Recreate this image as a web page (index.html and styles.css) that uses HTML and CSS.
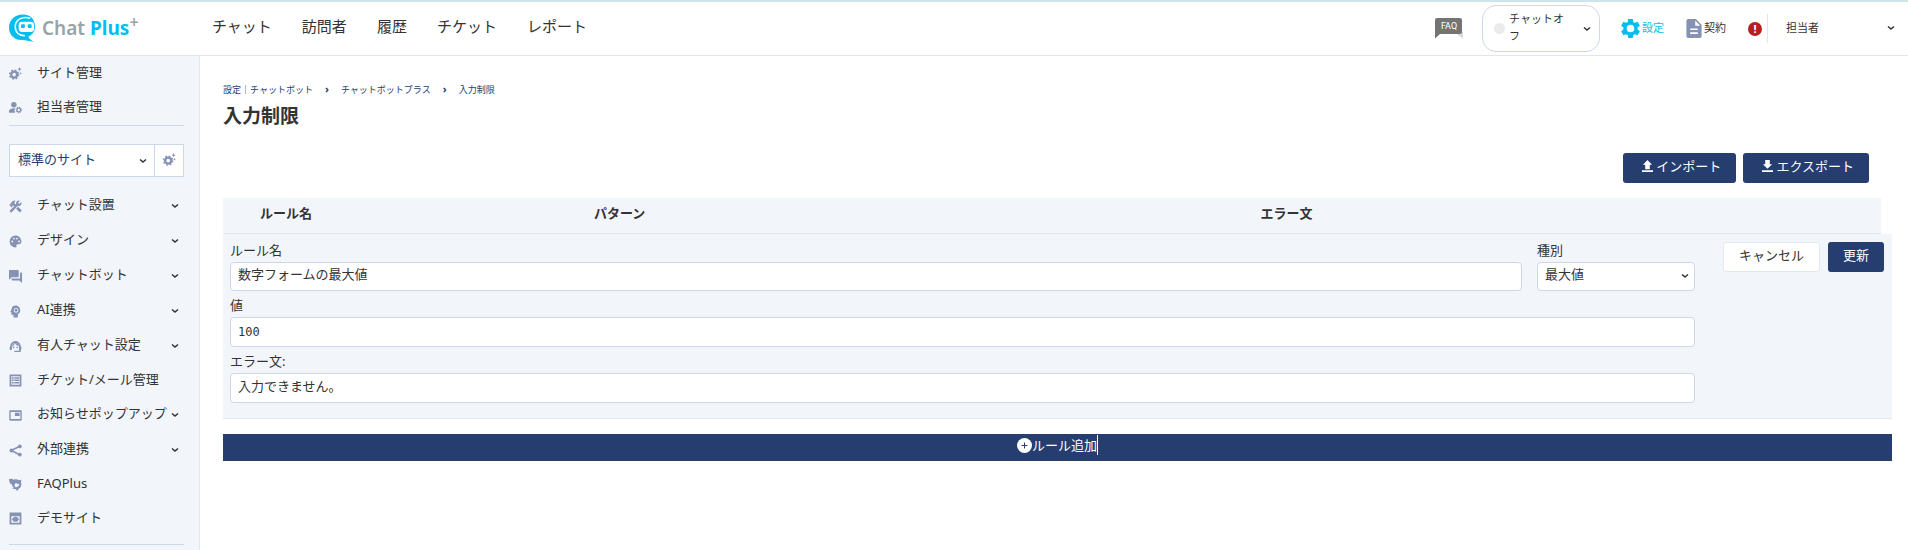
FILE: index.html
```html
<!DOCTYPE html>
<html lang="ja">

<head>
  <meta charset="UTF-8">
  <meta name="viewport" content="width=device-width, initial-scale=1.0">
  <title>入力制限 | Chat Plus</title>
  <link rel="stylesheet" href="styles.css">
</head>

<body>
  <!-- icons -->
  <svg class="sprite" aria-hidden="true">
    <symbol id="arrow" viewBox="0 0 8 6"><path d="M1 1.5l3 2.6 3-2.6" fill="none" stroke="currentColor" stroke-width="1.5"/></symbol>
    <symbol id="gear" viewBox="2 2 20 20"><path d="M19.43 12.98c.04-.32.07-.64.07-.98s-.03-.66-.07-.98l2.11-1.65c.19-.15.24-.42.12-.64l-2-3.46c-.12-.22-.39-.3-.61-.22l-2.49 1c-.52-.4-1.08-.73-1.69-.98l-.38-2.65A.49.49 0 0 0 14 2h-4c-.25 0-.46.18-.49.42l-.38 2.65c-.61.25-1.17.59-1.69.98l-2.49-1c-.23-.09-.49 0-.61.22l-2 3.46c-.13.22-.07.49.12.64l2.11 1.65c-.04.32-.07.65-.07.98s.03.66.07.98l-2.11 1.65c-.19.15-.24.42-.12.64l2 3.46c.12.22.39.3.61.22l2.49-1c.52.4 1.08.73 1.69.98l.38 2.65c.03.24.24.42.49.42h4c.25 0 .46-.18.49-.42l.38-2.65c.61-.25 1.17-.59 1.69-.98l2.49 1c.23.09.49 0 .61-.22l2-3.46c.12-.22.07-.49-.12-.64l-2.11-1.65zM12 16a4 4 0 1 1 0-8 4 4 0 0 1 0 8z"/></symbol>
    <symbol id="gears" viewBox="0 0 24 24"><g fill="none" stroke="currentColor"><circle cx="9.500" cy="14" r="5.500" stroke-width="4.200"/><circle cx="9.500" cy="14" r="8.300" stroke-width="2.600" stroke-dasharray="3.260"/></g><path d="M19.500 0l1.100 2.900 2.900 1.100-2.900 1.100L19.500 8l-1.100-2.900L15.500 4l2.900-1.100zM21.500 9l.8 2 1.700.7-1.700.8-.8 2-.8-2-1.700-.8 1.700-.7z"/></symbol>
    <symbol id="users" viewBox="0 0 24 24"><circle cx="9" cy="7" r="5"/><path d="M11 13.500C6 13 0 15 0 19v2.500h11a8 8 0 0 1 0-8z"/><g fill="none" stroke="currentColor"><circle cx="18" cy="16.500" r="3.400" stroke-width="2.400"/><circle cx="18" cy="16.500" r="5" stroke-width="2" stroke-dasharray="1.960"/></g></symbol>
    <symbol id="tools" viewBox="1 1 22 22"><path d="M13 16l3.500-3.500 6.200 6.200-3.500 3.500zM17.500 11a4.500 4.500 0 0 0 4.200-6.500l-3.200 3.200-2.200-2.200 3.200-3.200A4.500 4.500 0 0 0 13.200 7.500L12 8.800l-1.500-1.500.7-.7-1.600-1.600L12.500 2.500a4 4 0 0 0-5 .3L3.500 6.500 5 8H2.200l-1 1 4.500 4.500 1-1V9.800l1.400 1.400.8-.7 1 1L1.800 19.500l3 3L16 10.800z"/></symbol>
    <symbol id="palette" viewBox="1 1 22 22"><path fill-rule="evenodd" d="M12 2a10 10 0 0 0 0 20c1.400 0 2.200-1.200 1.700-2.400-.6-1.400.2-3 1.800-3H18a4 4 0 0 0 4-4C22 6.600 17.500 2 12 2zM6.500 13.500a1.500 1.500 0 1 1 0-3 1.500 1.500 0 0 1 0 3zm3-5a1.500 1.500 0 1 1 0-3 1.500 1.500 0 0 1 0 3zm5 0a1.500 1.500 0 1 1 0-3 1.500 1.500 0 0 1 0 3zm3.500 5a1.500 1.500 0 1 1 0-3 1.500 1.500 0 0 1 0 3z"/></symbol>
    <symbol id="forum" viewBox="2 2 20 20"><path d="M21 6h-2v9H6v2c0 .6.500 1 1 1h11l4 4V7c0-.6-.5-1-1-1zm-4 6V3c0-.6-.5-1-1-1H3c-.6 0-1 .4-1 1v14l4-4h10c.6 0 1-.5 1-1z"/></symbol>
    <symbol id="mind" viewBox="1 1 22 22"><path fill-rule="evenodd" d="M13 2a8 8 0 0 0-8 7.500L3.200 12.400c-.3.400 0 .9.400.9H5V16a2 2 0 0 0 2 2h1.500v4H16v-5.200A8 8 0 0 0 13 2zm0 4a4 4 0 1 1 0 8 4 4 0 0 1 0-8zm0 1.500a2.500 2.500 0 1 0 0 5 2.500 2.500 0 0 0 0-5z"/></symbol>
    <symbol id="agent" viewBox="1 2 22 20"><path d="M21 12.200C21 6.700 16.700 2.500 12 2.500s-9 4.100-9 9.800A2 2 0 0 0 2 14v2a2 2 0 0 0 2 2h2v-6a6 6 0 0 1 12 0v7h-8v2.500h9a2 2 0 0 0 2-2v-1.700c.6-.3 1-1 1-1.600v-2.400c0-.7-.4-1.300-1-1.600z"/><circle cx="9" cy="13.500" r="1.400"/><circle cx="15" cy="13.500" r="1.400"/><path d="M18 11a6 6 0 0 0-5.900-5c-3 0-6.300 2.500-6 6.500a8 8 0 0 0 4.800-5.900A8 8 0 0 0 18 11z"/></symbol>
    <symbol id="list" viewBox="1 1 22 22"><path fill-rule="evenodd" d="M2 2h20v20H2zm3 3v14h14V5zM6 6.500h3V9H6zm4 0h8V9h-8zm-4 4h3V13H6zm4 0h8V13h-8zm-4 4h3V17H6zm4 0h8V17h-8z"/></symbol>
    <symbol id="popup" viewBox="0 0 24 24"><path fill-rule="evenodd" d="M2 2.500h20A1.500 1.500 0 0 1 23.500 4v16a1.500 1.500 0 0 1-1.500 1.500H2A1.500 1.500 0 0 1 .5 20V4A1.500 1.500 0 0 1 2 2.500zm1 3v13h18v-13zM11 7h8.500v6H11z"/></symbol>
    <symbol id="share" viewBox="0 0 24 24"><path d="M20 4L4 12l16 8" fill="none" stroke="currentColor" stroke-width="3"/><circle cx="20" cy="4.500" r="3.500"/><circle cx="4.500" cy="12" r="3.500"/><circle cx="20" cy="19.500" r="3.500"/></symbol>
    <symbol id="faq" viewBox="0 0 24 24"><path fill-rule="evenodd" d="M0 2l6-.5 2 1.500c4-1.500 8-1 10 1l5-1-1 4.500c2 5 .5 10-3.500 12L15 24l-3-3.500c-3 0-5-1-6-2l3-1c-2.500-2-4-4-3.500-7L4 12C1.500 10 0 6 0 2zm13 7c-3 1-4 5-1 8 4.500 0 7-3 7-7-2 2-4 1-6-1z"/></symbol>
    <symbol id="demo" viewBox="1 1 22 22"><path fill-rule="evenodd" d="M2 2h20v20H2zm3 6v11h14V8zM12 9c3 0 4.500 1.500 6 4.200-1.500 2.800-3 4.300-6 4.300s-4.500-1.500-6-4.300C7.500 10.500 9 9 12 9z"/></symbol>
    <symbol id="doc" viewBox="0 0 16 20"><path fill-rule="evenodd" d="M2 0h8l6 6v12a2 2 0 0 1-2 2H2a2 2 0 0 1-2-2V2a2 2 0 0 1 2-2zm7.300 1.500V7h5.200zM4 10v1.700h8V10zm0 4v1.700h8V14z"/></symbol>
    <symbol id="upload" viewBox="0 0 12 13"><path d="M6 0l5 5H8.500v5h-5V5H1zM0 11.200h12V13H0z"/></symbol>
    <symbol id="download" viewBox="0 0 12 13"><path d="M3.500 0h5v4.500H11l-5 5-5-5h2.500zM0 11.200h12V13H0z"/></symbol>
  </svg>

  <header class="header">
    <a class="logo" href="#">
      <svg class="logo-mark" viewBox="0 0 28 30" aria-hidden="true">
        <path fill="#00bfef" d="M22 2.500C12-3 0 3 0 14c0 8 6 13.500 13.500 13 4 .2 8 1.200 12.500 2-2.500-1.500-4.500-3-6-5.500 4-1.500 7-5.500 7-10.500 0-4.500-2-8.500-5-10.500z"/>
        <path fill="none" stroke="#fff" stroke-width="1.600" d="M22 4.500C14 1.500 6.500 6 6.500 13c0 6 4 9.500 10 9.500"/>
        <rect x="10" y="8" width="16" height="10.500" rx="3.500" fill="#fff"/>
        <rect x="12.500" y="10.500" width="4" height="4" rx="1" fill="#00bfef"/>
        <rect x="19.500" y="10.500" width="4" height="4" rx="1" fill="#00bfef"/>
      </svg>
      <span class="logo-text">Chat <b>Plus</b><sup>+</sup></span>
    </a>
    <nav class="gnb">
      <a href="#">チャット</a>
      <a href="#">訪問者</a>
      <a href="#">履歴</a>
      <a href="#">チケット</a>
      <a href="#">レポート</a>
    </nav>
    <div class="util">
      <a class="faq-link" href="#">
        <svg viewBox="0 0 28 21" role="img" aria-label="FAQ">
          <path fill="#dedbd6" d="M20 14h8v7l-5-4z"/>
          <path fill="#747474" d="M2 0h23a2 2 0 0 1 2 2v12a2 2 0 0 1-2 2H5l-5 4.500V2a2 2 0 0 1 2-2z"/>
          <text x="14" y="11" text-anchor="middle" class="faq-text">FAQ</text>
        </svg>
      </a>
      <button class="status" type="button">
        <span class="dot"></span>
        <span class="status-text">チャットオフ</span>
        <svg class="arrow"><use href="#arrow"/></svg>
      </button>
      <a class="util-link active" href="#"><svg class="util-gear"><use href="#gear"/></svg>設定</a>
      <a class="util-link contract" href="#"><svg class="util-doc"><use href="#doc"/></svg>契約</a>
      <span class="alert">!</span>
      <button class="account" type="button">担当者<svg class="arrow"><use href="#arrow"/></svg></button>
    </div>
  </header>

  <div class="container">
    <aside class="side">
      <ul class="menu menu-top">
        <li><a href="#"><svg class="icon"><use href="#gears"/></svg>サイト管理</a></li>
        <li><a href="#"><svg class="icon"><use href="#users"/></svg>担当者管理</a></li>
      </ul>
      <div class="site-select">
        <select aria-label="サイト">
          <option>標準のサイト</option>
        </select>
        <button type="button" aria-label="サイト設定"><svg class="icon"><use href="#gears"/></svg></button>
      </div>
      <ul class="menu menu-main">
        <li class="has-sub"><a href="#"><svg class="icon"><use href="#tools"/></svg>チャット設置<svg class="arrow"><use href="#arrow"/></svg></a></li>
        <li class="has-sub"><a href="#"><svg class="icon"><use href="#palette"/></svg>デザイン<svg class="arrow"><use href="#arrow"/></svg></a></li>
        <li class="has-sub"><a href="#"><svg class="icon"><use href="#forum"/></svg>チャットボット<svg class="arrow"><use href="#arrow"/></svg></a></li>
        <li class="has-sub"><a href="#"><svg class="icon"><use href="#mind"/></svg>AI連携<svg class="arrow"><use href="#arrow"/></svg></a></li>
        <li class="has-sub"><a href="#"><svg class="icon"><use href="#agent"/></svg>有人チャット設定<svg class="arrow"><use href="#arrow"/></svg></a></li>
        <li><a href="#"><svg class="icon"><use href="#list"/></svg>チケット/メール管理</a></li>
        <li class="has-sub"><a href="#"><svg class="icon"><use href="#popup"/></svg>お知らせポップアップ<svg class="arrow"><use href="#arrow"/></svg></a></li>
        <li class="has-sub"><a href="#"><svg class="icon"><use href="#share"/></svg>外部連携<svg class="arrow"><use href="#arrow"/></svg></a></li>
        <li><a href="#"><svg class="icon"><use href="#faq"/></svg>FAQPlus</a></li>
        <li><a href="#"><svg class="icon"><use href="#demo"/></svg>デモサイト</a></li>
      </ul>
    </aside>

    <main class="contents">
      <nav class="breadcrumb">
        <a href="#">設定｜チャットボット</a><span>›</span><a href="#">チャットボットプラス</a><span>›</span><a href="#">入力制限</a>
      </nav>
      <h1>入力制限</h1>
      <div class="btns">
        <button class="btn" type="button"><svg><use href="#upload"/></svg>インポート</button>
        <button class="btn" type="button"><svg><use href="#download"/></svg>エクスポート</button>
      </div>

      <table class="rule-table">
        <thead>
          <tr>
            <th class="col-name">ルール名</th>
            <th class="col-pattern">パターン</th>
            <th>エラー文</th>
          </tr>
        </thead>
      </table>

      <form class="rule-form">
        <div class="fields">
          <div class="row">
            <div class="col">
              <label for="rule_name">ルール名</label>
              <input type="text" id="rule_name" value="数字フォームの最大値">
            </div>
            <div class="col col-type">
              <label for="rule_type">種別</label>
              <select id="rule_type">
                <option>最大値</option>
              </select>
            </div>
          </div>
          <div class="col">
            <label for="rule_value">値</label>
            <input class="mono" type="text" id="rule_value" value="100">
          </div>
          <div class="col">
            <label for="rule_error">エラー文:</label>
            <input type="text" id="rule_error" value="入力できません。">
          </div>
        </div>
        <div class="form-btns">
          <button class="btn btn-white" type="button">キャンセル</button>
          <button class="btn" type="submit">更新</button>
        </div>
      </form>

      <button class="btn-add" type="button">
        <svg viewBox="0 0 15 15"><circle cx="7.500" cy="7.500" r="7.500" fill="#fff"/><path d="M4.500 7.500h6M7.500 4.500v6" stroke="#263d70"/></svg>ルール追加<span class="caret"></span>
      </button>
    </main>
  </div>
</body>

</html>
```
FILE: styles.css
```css
* {
  box-sizing: border-box;
}

body {
  margin: 0;
  min-height: 100vh;
  display: flex;
  flex-direction: column;
  font-family: "Noto Sans", "Noto Sans CJK JP", sans-serif;
  font-size: 13px;
  line-height: 20px;
  color: #333333;
  background-color: #ffffff;
}

a {
  color: inherit;
  text-decoration: none;
}

button,
input,
select {
  font-family: inherit;
  font-size: 13px;
  line-height: 20px;
  color: #333333;
}

button {
  cursor: pointer;
}

svg {
  flex: none;
  fill: currentColor;
}

.sprite {
  position: absolute;
  width: 0;
  height: 0;
}

.arrow {
  width: 8px;
  height: 6px;
}

/* header */
.header {
  display: flex;
  align-items: center;
  height: 56px;
  padding: 0 13px 0 9px;
  border-top: 2px solid #cde4ea;
  border-bottom: 1px solid #e2e5f0;
}

.logo {
  display: flex;
  align-items: center;
  width: 203px;
}

.logo-mark {
  width: 27px;
  height: 29px;
  margin-right: 6px;
}

.logo-text {
  padding-bottom: 2px;
  font-family: "Noto Sans", sans-serif;
  font-size: 19px;
  font-weight: 600;
  line-height: 28px;
  color: #99a3a6;
}

.logo-text b {
  font-weight: 700;
  color: #00bfef;
}

.logo-text sup {
  font-size: 16px;
  line-height: 0;
}

.gnb {
  display: flex;
  gap: 30px;
  padding-bottom: 6px;
  font-size: 15px;
}

.util {
  display: flex;
  align-items: center;
  margin-left: auto;
  font-size: 11px;
}

.faq-link svg {
  display: block;
  width: 28px;
  height: 21px;
}

.faq-text {
  font-family: Roboto, sans-serif;
  font-size: 9px;
  fill: #ffffff;
}

.status {
  display: flex;
  align-items: center;
  width: 118px;
  height: 47px;
  margin-left: 19px;
  padding: 0 8px 0 11px;
  border: 1px solid #ccd7ea;
  border-radius: 14px;
  background-color: #ffffff;
}

.status .dot {
  width: 11px;
  height: 11px;
  margin-right: 4px;
  border-radius: 50%;
  background-color: #ebebeb;
}

.status-text {
  width: 60px;
  margin-right: auto;
  padding-bottom: 3px;
  font-size: 11px;
  line-height: 17px;
  text-align: left;
}

.util-link {
  display: flex;
  align-items: center;
  gap: 2px;
  margin-left: 21px;
  padding-bottom: 1px;
}

.util-link.contract {
  margin-left: 22px;
}

.util-link.active {
  color: #00bfef;
}

.util-gear {
  width: 19px;
  height: 19px;
}

.util-doc {
  width: 16px;
  height: 19px;
  color: #8592b3;
}

.alert {
  width: 14px;
  height: 14px;
  margin: 0 5px 0 22px;
  border-radius: 50%;
  font-weight: bold;
  line-height: 14px;
  text-align: center;
  color: #ffffff;
  background-color: #b3201f;
}

.account {
  display: flex;
  align-items: center;
  justify-content: space-between;
  width: 128px;
  height: 29px;
  padding: 0 0 1px 18px;
  border: none;
  border-left: 1px solid #dfe4f0;
  font-size: 11px;
  background: none;
}

/* side menu */
.container {
  display: flex;
  flex: 1;
}

.side {
  width: 200px;
  padding: 0 15px 0 9px;
  border-right: 1px solid #e2e5f0;
  background-color: #f2f5fa;
}

.menu {
  margin: 0;
  padding: 0;
  list-style: none;
  border-bottom: 1px solid #ccd7ea;
}

.menu a {
  display: flex;
  align-items: center;
  height: 34px;
  padding-bottom: 3px;
  white-space: nowrap;
}

.menu .has-sub a {
  height: 35px;
}

.menu-top {
  padding-bottom: 1px;
}

.menu .arrow {
  margin-top: 3px;
  margin-right: 5px;
  margin-left: auto;
}

.icon {
  width: 13px;
  height: 13px;
  color: #8592b3;
}

.menu .icon {
  margin-top: 4px;
  margin-right: 15px;
}

.menu-main {
  padding-bottom: 9px;
}

.site-select {
  display: flex;
  height: 33px;
  margin: 18px 0 11px;
  border: 1px solid #ccd7ea;
  background-color: #ffffff;
}

select {
  appearance: none;
  background: #ffffff url("data:image/svg+xml,%3Csvg xmlns='http://www.w3.org/2000/svg' viewBox='0 0 8 6'%3E%3Cpath d='M1 1.5l3 2.6 3-2.6' fill='none' stroke='%23333' stroke-width='1.5'/%3E%3C/svg%3E") right 7px center / 8px 6px no-repeat;
}

.site-select select {
  flex: 1;
  min-width: 0;
  padding: 0 20px 3px 8px;
  border: none;
  color: #263d70;
}

.site-select button {
  display: flex;
  align-items: center;
  justify-content: center;
  width: 29px;
  padding: 0 0 2px;
  border: none;
  border-left: 1px solid #ccd7ea;
  background: none;
}

/* contents */
.contents {
  flex: 1;
  min-width: 0;
  padding: 23px 16px 24px 23px;
}

.breadcrumb {
  font-size: 9px;
  color: #263d70;
}

.breadcrumb span {
  margin: 0 12px;
  font-size: 11px;
  font-weight: bold;
}

h1 {
  margin: 2px 0 23px;
  font-size: 19px;
  line-height: 28px;
}

.btns {
  display: flex;
  justify-content: flex-end;
  gap: 7px;
  margin: 0 23px 15px 0;
}

.btn {
  height: 30px;
  padding: 0 15px 3px;
  border: none;
  border-radius: 3px;
  color: #ffffff;
  background-color: #263d70;
}

.btns .btn {
  display: flex;
  align-items: center;
  padding: 0 15px 4px 19px;
}

.btns .btn svg {
  width: 11px;
  height: 12px;
  margin-right: 3px;
}

.btn-white {
  border: 1px solid #e2e8f2;
  color: #333333;
  background-color: #ffffff;
}

.rule-table {
  width: calc(100% - 11px);
  border-collapse: collapse;
  table-layout: fixed;
  background-color: #f2f5fa;
}

.rule-table th {
  height: 35px;
  padding: 0 0 4px;
  border-bottom: 1px solid #e2e8f2;
  text-align: left;
}

.rule-table .col-name {
  width: 371px;
  padding-left: 37px;
}

.rule-table .col-pattern {
  width: 40.2%;
}

.rule-form {
  display: flex;
  gap: 28px;
  margin-bottom: 15px;
  padding: 8px 8px 15px 7px;
  border-bottom: 1px solid #e2e8f2;
  background-color: #f2f5fa;
}

.fields {
  flex: 1;
  display: flex;
  flex-direction: column;
  gap: 6px;
}

.row {
  display: flex;
  gap: 15px;
}

.col {
  flex: 1;
}

.row .col-type {
  flex: none;
  width: 158px;
}

.col label {
  display: block;
  padding-bottom: 4px;
  line-height: 16px;
}

.col input,
.col select {
  display: block;
  width: 100%;
  height: 30px;
  padding: 0 7px 5px;
  border: 1px solid #ccd7ea;
  border-radius: 4px;
}

.row input,
.row select {
  height: 29px;
}

.col select {
  background-position: right 5px center;
}

.col input.mono {
  padding-bottom: 0;
  font-family: "DejaVu Sans Mono", monospace;
  font-size: 12px;
}

.form-btns {
  display: flex;
  align-items: flex-start;
  gap: 8px;
}

.btn-add {
  display: flex;
  align-items: center;
  justify-content: center;
  width: 100%;
  height: 27px;
  padding: 0 0 4px;
  border: none;
  color: #ffffff;
  background-color: #263d70;
}

.btn-add svg {
  width: 15px;
  height: 15px;
}

.btn-add .caret {
  width: 1px;
  height: 20px;
  background-color: #ffffff;
}
```
